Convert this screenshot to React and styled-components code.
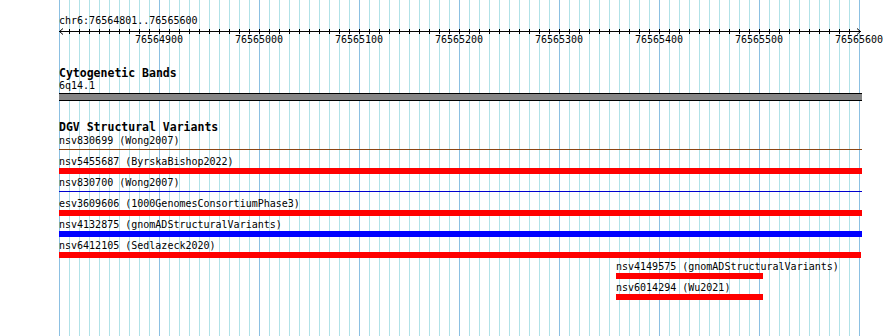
import React from "react";
import styled, { createGlobalStyle } from "styled-components";

const GlobalStyle = createGlobalStyle`
  html, body {
    margin: 0;
    padding: 0;
    background: #fff;
  }
  body {
    font-family: "DejaVu Sans Mono", "Liberation Mono", monospace;
    color: #000;
  }
`;

const Page = styled.div`
  display: flex;
  width: 890px;
  height: 336px;
  overflow: hidden;
  background: #fff;
`;

const Gutter = styled.div`
  flex: none;
  width: 59px;
`;

const Tracks = styled.div`
  flex: none;
  width: 803px;
  height: 336px;
  display: flex;
  flex-direction: column;
  background-image: repeating-linear-gradient(
      to right,
      #8cc0e2 0 1px,
      transparent 1px 100px
    ),
    repeating-linear-gradient(to right, #b2e2e8 0 1px, transparent 1px 10px);
`;

const Ruler = styled.div`
  padding-top: 15px;
`;

const Location = styled.div`
  font-size: 10px;
  line-height: 12px;
  white-space: nowrap;
`;

const Scale = styled.svg`
  display: block;
  overflow: visible;
  font-family: "DejaVu Sans Mono", "Liberation Mono", monospace;
  font-size: 10px;
`;

const Track = styled.section`
  margin-top: ${({ $gap }) => $gap}px;
`;

const TrackTitle = styled.h2`
  margin: 0;
  font-size: 11.5px;
  line-height: 14px;
  font-weight: bold;
  white-space: nowrap;
`;

const BandLabel = styled.div`
  font-size: 10px;
  line-height: 12px;
`;

const Band = styled.div`
  margin-top: 1px;
  height: 6px;
  border: 1px solid #000;
  border-left: none;
  border-right: none;
  background: #858585;
`;

const Rows = styled.div`
  padding-top: 1px;
  display: flex;
  flex-direction: column;
`;

const Row = styled.div`
  height: 21px;
  display: flex;
`;

const Feature = styled.div`
  display: flex;
  flex-direction: column;
`;

const FeatureLabel = styled.div`
  font-size: 10px;
  line-height: 12px;
  white-space: nowrap;
`;

const Glyph = styled.div`
  height: ${({ $thin }) => ($thin ? 1 : 6)}px;
  margin: ${({ $thin }) => ($thin ? "2px 0 3px" : "0")};
  background: ${({ $color }) => $color};
`;

const START = 76564801;
const END = 76565600;
const WIDTH = 803;

const variants = [
  { id: "nsv830699", src: "Wong2007", from: 0, to: WIDTH, color: "#8b4513", thin: true },
  { id: "nsv5455687", src: "ByrskaBishop2022", from: 0, to: WIDTH, color: "#ff0000" },
  { id: "nsv830700", src: "Wong2007", from: 0, to: WIDTH, color: "#0000cd", thin: true },
  { id: "esv3609606", src: "1000GenomesConsortiumPhase3", from: 0, to: WIDTH, color: "#ff0000" },
  { id: "nsv4132875", src: "gnomADStructuralVariants", from: 0, to: WIDTH, color: "#0000ff" },
  { id: "nsv6412105", src: "Sedlazeck2020", from: 0, to: 802, color: "#ff0000" },
  { id: "nsv4149575", src: "gnomADStructuralVariants", from: 557, to: 704, color: "#ff0000" },
  { id: "nsv6014294", src: "Wu2021", from: 557, to: 704, color: "#ff0000" },
];

const ticks = Array.from({ length: 80 }, (_, i) => i * 10);
const labels = [1, 2, 3, 4, 5, 6, 7, 8].map((i) => ({
  x: i * 100,
  text: String(START - 1 + i * 100),
}));

const ScaleBar = () => (
  <Scale width={WIDTH} height={20}>
    <line x1={0} y1={4.5} x2={802} y2={4.5} stroke="#000" />
    <polyline points="4,1.5 0.5,4.5 4,7.5" fill="none" stroke="#000" />
    <polyline points="798,1.5 801.5,4.5 798,7.5" fill="none" stroke="#000" />
    {ticks.slice(1).map((x) => (
      <line key={x} x1={x + 0.5} y1={2} x2={x + 0.5} y2={7} stroke="#000" />
    ))}
    {labels.map(({ x, text }) => (
      <text key={x} x={x} y={16} textAnchor="middle" fill="#000">
        {text}
      </text>
    ))}
  </Scale>
);

const App = () => (
  <>
    <GlobalStyle />
    <Page>
      <Gutter />
      <Tracks>
        <Ruler>
          <Location>
            chr6:{START}..{END}
          </Location>
          <ScaleBar />
        </Ruler>

        <Track $gap={19}>
          <TrackTitle>Cytogenetic Bands</TrackTitle>
          <BandLabel>6q14.1</BandLabel>
          <Band />
        </Track>

        <Track $gap={19}>
          <TrackTitle>DGV Structural Variants</TrackTitle>
          <Rows>
            {variants.map((v) => (
              <Row key={v.id}>
                <Feature style={{ marginLeft: v.from, width: v.to - v.from }}>
                  <FeatureLabel>
                    {v.id} ({v.src})
                  </FeatureLabel>
                  <Glyph $thin={v.thin} $color={v.color} />
                </Feature>
              </Row>
            ))}
          </Rows>
        </Track>
      </Tracks>
    </Page>
  </>
);

export default App;
